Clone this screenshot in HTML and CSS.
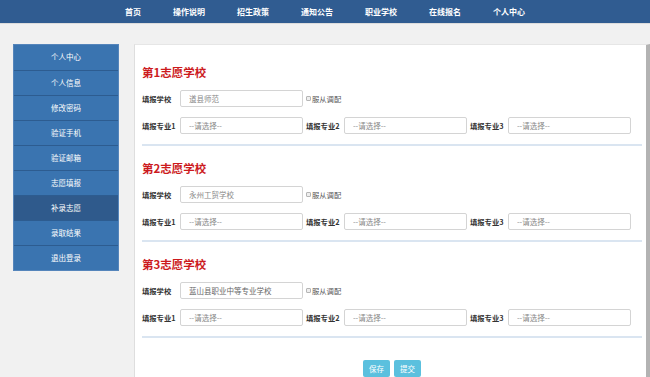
FILE: index.html
```html
<!DOCTYPE html>
<html lang="zh-CN">
<head>
    <meta charset="UTF-8">
    <meta name="viewport" content="width=device-width, initial-scale=1.0">
    <title>补录志愿</title>
    <link rel="stylesheet" href="styles.css">
</head>
<body>
<div class="topbar">
    <ul class="nav">
        <li><a href="#">首页</a></li>
        <li><a href="#">操作说明</a></li>
        <li><a href="#">招生政策</a></li>
        <li><a href="#">通知公告</a></li>
        <li><a href="#">职业学校</a></li>
        <li><a href="#">在线报名</a></li>
        <li><a href="#">个人中心</a></li>
    </ul>
</div>

<div class="wrap">
    <ul class="side-menu">
        <li><a href="#">个人中心</a></li>
        <li><a href="#">个人信息</a></li>
        <li><a href="#">修改密码</a></li>
        <li><a href="#">验证手机</a></li>
        <li><a href="#">验证邮箱</a></li>
        <li><a href="#">志愿填报</a></li>
        <li class="active"><a href="#">补录志愿</a></li>
        <li><a href="#">录取结果</a></li>
        <li><a href="#">退出登录</a></li>
    </ul>

    <div class="panel">
        <form id="wishForm">
            <div class="wish">
                <h3>第1志愿学校</h3>
                <div class="form-row">
                    <label>填报学校</label>
                    <input type="text" class="field" value="道县师范">
                    <label class="obey"><input type="checkbox">服从调配</label>
                </div>
                <div class="form-row">
                    <label>填报专业1</label>
                    <select class="field"><option>--请选择--</option></select>
                    <label>填报专业2</label>
                    <select class="field"><option>--请选择--</option></select>
                    <label>填报专业3</label>
                    <select class="field"><option>--请选择--</option></select>
                </div>
            </div>
            <div class="wish">
                <h3>第2志愿学校</h3>
                <div class="form-row">
                    <label>填报学校</label>
                    <input type="text" class="field" value="永州工贸学校">
                    <label class="obey"><input type="checkbox">服从调配</label>
                </div>
                <div class="form-row">
                    <label>填报专业1</label>
                    <select class="field"><option>--请选择--</option></select>
                    <label>填报专业2</label>
                    <select class="field"><option>--请选择--</option></select>
                    <label>填报专业3</label>
                    <select class="field"><option>--请选择--</option></select>
                </div>
            </div>
            <div class="wish">
                <h3>第3志愿学校</h3>
                <div class="form-row">
                    <label>填报学校</label>
                    <input type="text" class="field dark" value="蓝山县职业中等专业学校">
                    <label class="obey"><input type="checkbox">服从调配</label>
                </div>
                <div class="form-row">
                    <label>填报专业1</label>
                    <select class="field"><option>--请选择--</option></select>
                    <label>填报专业2</label>
                    <select class="field"><option>--请选择--</option></select>
                    <label>填报专业3</label>
                    <select class="field"><option>--请选择--</option></select>
                </div>
            </div>
            <div class="actions">
                <button type="button">保存</button>
                <button type="submit">提交</button>
            </div>
        </form>
    </div>
</div>
</body>
</html>
```

FILE: styles.css
```css
body {
    margin: 0;
    font-family: "Noto Sans CJK SC", "Microsoft YaHei", sans-serif;
    background-color: #f1f1f1;
    height: 377px;
    overflow: hidden;
}
ul {
    list-style: none;
    margin: 0;
    padding: 0;
}
a {
    text-decoration: none;
}
.topbar {
    height: 23px;
    background-color: #305c91;
    border-bottom: 1px solid #dcdcdc;
}
.nav {
    display: flex;
    justify-content: center;
}
.nav li a {
    display: block;
    padding: 0 16px;
    line-height: 23px;
    font-size: 8px;
    font-weight: bold;
    color: #fff;
}
.wrap {
    display: flex;
    align-items: flex-start;
    margin: 20px 0 0 13px;
}
.side-menu {
    width: 104px;
    border: 1px solid #5585bb;
    background-color: #3a74b0;
}
.side-menu li {
    border-top: 1px solid #2d5c90;
}
.side-menu li:first-child {
    border-top: none;
}
.side-menu li a {
    display: block;
    height: 24px;
    line-height: 24px;
    text-align: center;
    font-size: 7.5px;
    color: #fff;
}
.side-menu li:first-child a {
    height: 25px;
}
.side-menu li.active {
    background-color: #2f5a8c;
}
.panel {
    margin-left: 15px;
    width: 500px;
    height: 314px;
    box-sizing: content-box;
    padding: 18px 4px 0 7px;
    background-color: #fff;
    border-left: 1px solid #dedede;
    border-top: 1px solid #e6e6e6;
    border-right: 4px solid #b3b3b3;
    overflow: hidden;
}
.wish {
    border-bottom: 2px solid #dae5f1;
    padding-bottom: 10px;
    margin-bottom: 13px;
}
.wish h3 {
    margin: 0 0 9px 0;
    font-size: 11.5px;
    line-height: 18px;
    color: #cc1a1d;
}
.form-row {
    display: flex;
    align-items: center;
    margin-bottom: 10px;
}
.form-row:last-child {
    margin-bottom: 0;
}
.form-row label {
    width: 38px;
    flex-shrink: 0;
    font-size: 7.3px;
    font-weight: bold;
    color: #333;
    white-space: nowrap;
}
.field {
    width: 123px;
    height: 17px;
    margin-right: 3px;
    padding: 0 0 0 8px;
    box-sizing: border-box;
    border: 1px solid #d4d4d4;
    border-radius: 2px;
    background-color: #fff;
    font-family: inherit;
    font-size: 7.5px;
    color: #888;
    outline: none;
    -webkit-appearance: none;
    appearance: none;
}
.field.dark {
    color: #666;
}
.form-row label.obey {
    width: auto;
    display: flex;
    align-items: center;
    font-weight: normal;
    color: #555;
}
.obey input {
    -webkit-appearance: none;
    appearance: none;
    width: 5px;
    height: 5px;
    margin: 0 1px 0 0;
    border: 1px solid #b5b5b5;
    border-radius: 1px;
    background-color: #eee;
}
.actions {
    display: flex;
    justify-content: center;
    gap: 4px;
    padding-top: 9px;
}
.actions button {
    width: 27px;
    height: 17px;
    padding: 0;
    border: none;
    border-radius: 2px;
    background-color: #5bc0de;
    color: #fff;
    font-family: inherit;
    font-size: 7.5px;
    cursor: pointer;
}
```
